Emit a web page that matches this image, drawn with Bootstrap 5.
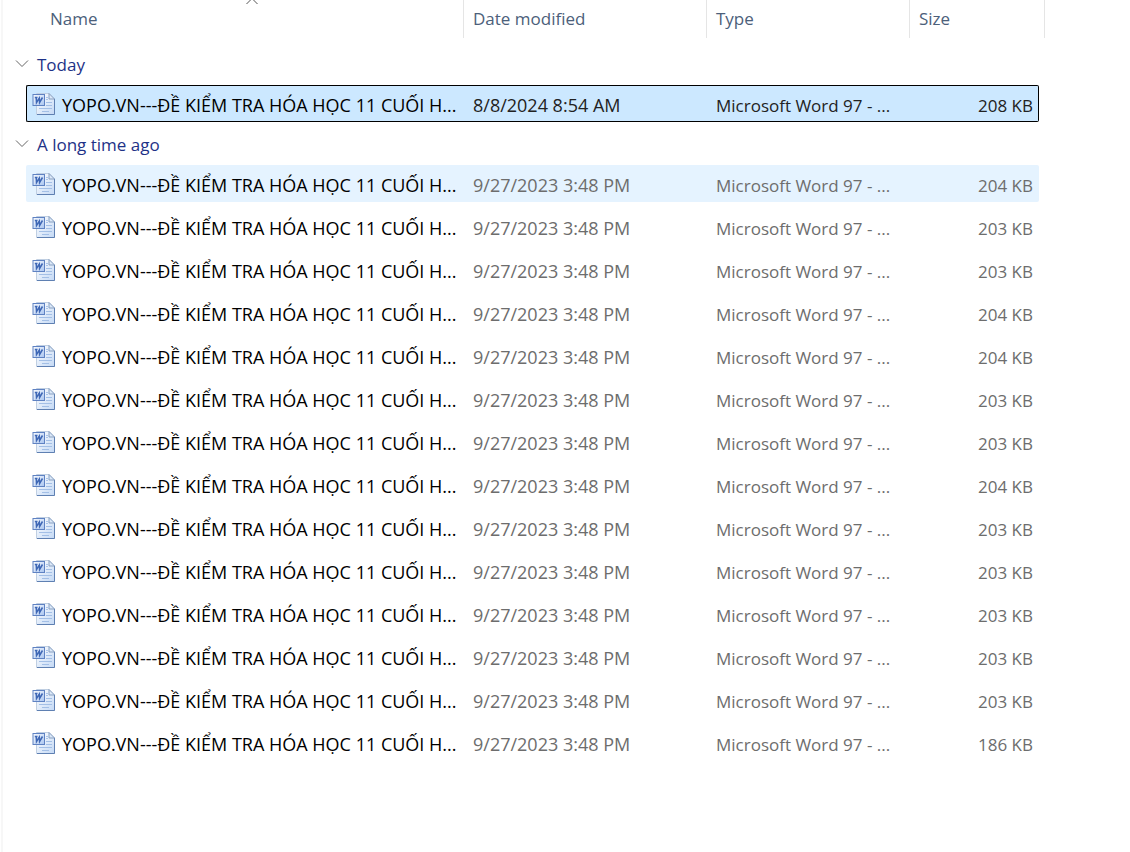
<!DOCTYPE html>
<html lang="en">
<head>
<meta charset="utf-8">
<meta name="viewport" content="width=device-width, initial-scale=1">
<title>Files</title>
<link href="https://cdn.jsdelivr.net/npm/bootstrap@5.3.0/dist/css/bootstrap.min.css" rel="stylesheet">
<style>
body { font-family: "Open Sans", "Noto Sans", sans-serif; font-size: 17px; line-height: 24px; color: #000; background: #fff; }
.pane { display: flow-root; margin-left: 1px; border-left: 2px solid #f7f7f7; padding-right: 85px; }
.files { table-layout: fixed; border-collapse: separate; border-spacing: 0 6px; margin-top: -6px; }
.files th, .files td { padding: 0; font-weight: inherit; vertical-align: middle; white-space: nowrap; }
.c-gutter { width: 23px; } .c-date { width: 243px; } .c-type { width: 203px; } .c-size { width: 130px; } .c-tail { width: 6px; }
.files thead th { height: 42px; vertical-align: top; }
.head { display: block; width: 100%; height: 38px; padding: 0 9px 1px; border: 0; border-left: 1px solid #e5e5e5; background: none; color: #4c607a; font-weight: inherit; text-align: left; }
.head-name { padding-left: 47px; border: 0; }
.head-last { border-right: 1px solid #e5e5e5; }
.sort { top: -4px; left: calc(50% + 12px); }
.group-btn { display: flex; align-items: center; gap: 8px; height: 31px; padding: 0 0 0 12px; border: 0; background: none; color: #1e3287; font-weight: inherit; }
.group-btn span { padding-top: 2px; }
.file td { height: 37px; padding: 4px 0 0 10px; color: #6d6d6d; }
.file td.gutter { padding: 0; }
.file td.name { padding: 0 0 0 6px; color: #000; border-radius: 2px 0 0 2px; }
.file td.name, .file td.date { font-size: 18px; }
.file td.date, .name span { padding-top: 2px; }
.file td.size { padding-right: 6px; border-radius: 0 2px 2px 0; }
.name svg { margin-right: 6px; }
.hovered td:not(.gutter, .tail) { background: #e5f3ff; }
.selected td:not(.gutter, .tail) { background: #cce8ff; color: #222; border: solid #000; border-width: 1px 0; }
.files .selected td.name { border-left-width: 1px; padding-left: 5px; color: #000; }
.files .selected td.size { border-right-width: 1px; padding-right: 5px; }
</style>
</head>
<body>
<svg width="0" height="0" class="position-absolute" aria-hidden="true">
  <defs>
    <linearGradient id="paper" x1="0" y1="0" x2="1" y2="1"><stop offset="0" stop-color="#fff"/><stop offset="1" stop-color="#c4d9f5"/></linearGradient>
    <linearGradient id="tile" x1="0" y1="0" x2="1" y2="1"><stop offset="0" stop-color="#fafcff"/><stop offset="1" stop-color="#a9c5f0"/></linearGradient>
    <symbol id="word" viewBox="0 0 24 24">
      <path d="M4.500 1.500H17L22.500 7V22.500H4.500Z" fill="url(#paper)" stroke="#c0cfe2"/>
      <path d="M22.500 7V22.500H5" fill="none" stroke="#5f80b2"/>
      <path d="M17 1.500V7H22.500Z" fill="#dbe8f8" stroke="#7f98bb" stroke-width=".9"/>
      <path d="M14 5.500h2M14 7.500h2" stroke="#a9c4ea"/>
      <path d="M14 10.500h6M14 13.500h6M7 16.500h13M10 19.500h7" stroke="#a3bfe6"/>
      <rect x="1" y="2.500" width="11.500" height="11" fill="url(#tile)" stroke="#5f82c2"/>
      <path d="M2.800 5.500H5.500M4.200 5.500 4.500 10.500 7.300 6 7.600 10.500 10.500 5.500" fill="none" stroke="#3f68b6" stroke-width="1.500"/>
    </symbol>
  </defs>
</svg>
<main class="pane min-vh-100">
  <table class="files w-100">
    <colgroup><col class="c-gutter"><col><col class="c-date"><col class="c-type"><col class="c-size"><col class="c-tail"></colgroup>
    <thead>
      <tr>
        <th colspan="2" scope="col" class="position-relative" aria-sort="ascending">
          <button type="button" class="head head-name">Name</button>
          <svg class="sort position-absolute" width="14" height="10" aria-hidden="true"><path d="M1.500 8 7 2.500 12.500 8" fill="none" stroke="#555"/></svg>
        </th>
        <th scope="col"><button type="button" class="head">Date modified</button></th>
        <th scope="col"><button type="button" class="head">Type</button></th>
        <th colspan="2" scope="col"><button type="button" class="head head-last">Size</button></th>
      </tr>
    </thead>
    <tbody id="today"></tbody>
    <tbody id="older"></tbody>
  </table>
</main>
<script>
const title = "YOPO.VN---ĐỀ KIỂM TRA HÓA HỌC 11 CUỐI H...";
const group = label => `<tr><th colspan="6" scope="rowgroup"><button type="button" class="group-btn" aria-expanded="true">
  <svg width="14" height="10" aria-hidden="true"><path d="M1 1.500 7 7.500 13 1.500" fill="none" stroke="#666"/></svg><span>${label}</span></button></th></tr>`;
const file = (date, size, state = "") => `<tr class="file ${state}"><td class="gutter"></td>
  <td class="name"><div class="d-flex align-items-center"><svg width="24" height="24" aria-hidden="true"><use href="#word"/></svg><span>${title}</span></div></td>
  <td class="date">${date}</td><td>Microsoft Word 97 - ...</td><td class="size text-end">${size} KB</td><td class="gutter tail"></td></tr>`;
document.getElementById("today").innerHTML = group("Today") + file("8/8/2024 8:54 AM", 208, "selected");
document.getElementById("older").innerHTML = group("A long time ago") +
  [204, 203, 203, 204, 204, 203, 203, 204, 203, 203, 203, 203, 203, 186]
    .map((size, i) => file("9/27/2023 3:48 PM", size, i ? "" : "hovered")).join("");
</script>
<script src="https://cdn.jsdelivr.net/npm/bootstrap@5.3.0/dist/js/bootstrap.bundle.min.js"></script>
</body>
</html>
